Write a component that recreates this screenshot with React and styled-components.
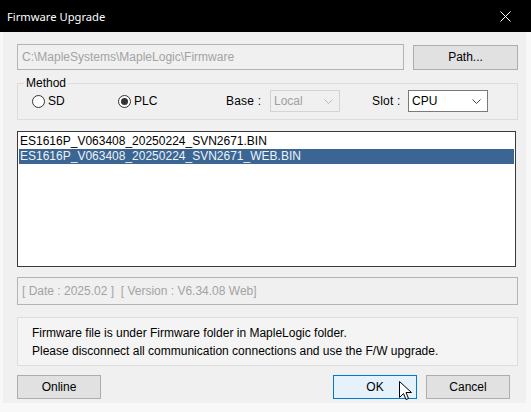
import React from "react";
import styled, { createGlobalStyle } from "styled-components";

const Global = createGlobalStyle`
  html, body { margin: 0; padding: 0; background: #f8f8f8; }
  body { font-family: "Liberation Sans", Arial, sans-serif; font-size: 12px; color: #000; }
  * { box-sizing: border-box; }
`;

const Window = styled.div`
  width: 531px;
  height: 412px;
  background: #f8f8f8;
  display: flex;
  flex-direction: column;
  position: relative;
  overflow: hidden;
`;

const TitleBar = styled.div`
  height: 32px;
  background: #000;
  color: #fff;
  display: flex;
  align-items: center;
  padding: 0 0 0 7px;
  font-family: "Noto Sans", "Open Sans", sans-serif;
  font-size: 11.2px;
  flex: none;
`;

const TitleText = styled.span`
  flex: 1;
  margin-top: 1px;
`;

const CloseBtn = styled.div`
  width: 46px;
  height: 32px;
  display: flex;
  align-items: center;
  justify-content: center;
  margin-right: 3px;
`;

const Body = styled.div`
  flex: none;
  height: 371px;
  margin: 0 5px 0 3px;
  background: #f0f0f0;
  padding: 12px 5px 0 14px;
  display: flex;
  flex-direction: column;
`;

const Row = styled.div`
  display: flex;
  align-items: center;
  height: ${(p) => p.$h || 26}px;
  margin-top: ${(p) => p.$mt || 0}px;
`;

const PathBox = styled.div`
  width: 387px;
  height: 26px;
  border: 1px solid #b4b4b4;
  background: #f0f0f0;
  color: #a3a3a3;
  display: flex;
  align-items: center;
  padding-left: 4px;
`;

const Button = styled.div`
  width: ${(p) => p.$w || 84}px;
  height: ${(p) => p.$h || 24}px;
  border: 1px solid ${(p) => (p.$default ? "#0078d7" : "#adadad")};
  background: ${(p) => (p.$default ? "#e5f1fb" : "#e1e1e1")};
  display: flex;
  align-items: center;
  justify-content: center;
  margin-left: ${(p) => p.$ml || 0}px;
  position: relative;
  flex: none;
`;

const Group = styled.fieldset`
  margin: 6px 0 0 0;
  padding: 0;
  border: 1px solid #dcdcdc;
  width: 501px;
  min-width: 0;
`;

const Legend = styled.legend`
  margin-left: 6px;
  padding: 0 2px;
  line-height: 14px;
  font-size: 12px;
`;

const GroupRow = styled.div`
  display: flex;
  align-items: center;
  height: 22px;
  margin-bottom: 7px;
  padding-left: 14px;
`;

const RadioItem = styled.label`
  display: flex;
  align-items: center;
  width: ${(p) => p.$w}px;
  gap: 3px;
  flex: none;
`;

const RadioCircle = styled.span`
  width: 13px;
  height: 13px;
  border-radius: 50%;
  border: 1px solid #333;
  background: #fff;
  display: flex;
  align-items: center;
  justify-content: center;
  &::after {
    content: "";
    display: ${(p) => (p.$checked ? "block" : "none")};
    width: 7px;
    height: 7px;
    border-radius: 50%;
    background: #333;
  }
`;

const FieldLabel = styled.span`
  width: ${(p) => p.$w}px;
  margin-left: ${(p) => p.$ml || 0}px;
  flex: none;
  letter-spacing: 0.2px;
`;

const Combo = styled.div`
  width: ${(p) => p.$w}px;
  height: 22px;
  border: 1px solid ${(p) => (p.$disabled ? "#d4d4d4" : "#7a7a7a")};
  background: ${(p) => (p.$disabled ? "#f0f0f0" : "#fff")};
  color: ${(p) => (p.$disabled ? "#a0a0a0" : "#000")};
  display: flex;
  align-items: center;
  padding: 0 6px 0 3px;
  flex: none;
  span { flex: 1; }
`;

const ListBox = styled.div`
  margin-top: 11px;
  width: 499px;
  height: 136px;
  border: 1px solid #3a3a3a;
  background: #fff;
  padding: 2px 1px 0 1px;
  display: flex;
  flex-direction: column;
`;

const ListItem = styled.div`
  height: 15px;
  line-height: 15px;
  padding-left: 1px;
  background: ${(p) => (p.$selected ? "#3b6592" : "transparent")};
  color: ${(p) => (p.$selected ? "#eef3f8" : "#000")};
  white-space: nowrap;
`;

const InfoBox = styled.div`
  margin-top: 10px;
  width: 501px;
  height: 28px;
  border: 1px solid #b4b4b4;
  background: #f0f0f0;
  color: #a3a3a3;
  display: flex;
  align-items: center;
  padding-left: 4px;
  padding-bottom: 1px;
  white-space: pre;
`;

const MessageBox = styled.div`
  margin-top: 12px;
  width: 501px;
  height: 49px;
  border: 1px solid #dedede;
  background: #f4f4f4;
  padding: 6px 0 0 14px;
  line-height: 18px;
`;

const ButtonRow = styled.div`
  display: flex;
  margin-top: 9px;
  width: 493px;
`;

const Spacer = styled.div`
  flex: 1;
`;

const Cursor = styled.svg`
  position: absolute;
  left: 65px;
  top: 5px;
`;

const Chevron = ({ color }) => (
  <svg width="9" height="5" viewBox="0 0 9 5">
    <polyline points="0.5,0.5 4.5,4.5 8.5,0.5" fill="none" stroke={color} strokeWidth="1" />
  </svg>
);

export default function App() {
  return (
    <>
      <Global />
      <Window>
        <TitleBar>
          <TitleText>Firmware Upgrade</TitleText>
          <CloseBtn>
            <svg width="11" height="11" viewBox="0 0 11 11">
              <path d="M0.5 0.5 L10.5 10.5 M10.5 0.5 L0.5 10.5" stroke="#fff" strokeWidth="1" />
            </svg>
          </CloseBtn>
        </TitleBar>
        <Body>
          <Row>
            <PathBox>C:\MapleSystems\MapleLogic\Firmware</PathBox>
            <Button $w={105} $h={25} $ml={9}>Path...</Button>
          </Row>
          <Group>
            <Legend>Method</Legend>
            <GroupRow>
              <RadioItem $w={86}>
                <RadioCircle />
                SD
              </RadioItem>
              <RadioItem $w={108}>
                <RadioCircle $checked />
                PLC
              </RadioItem>
              <FieldLabel $w={44}>Base :</FieldLabel>
              <Combo $w={70} $disabled>
                <span>Local</span>
                <Chevron color="#b8b8b8" />
              </Combo>
              <FieldLabel $w={36} $ml={32}>Slot :</FieldLabel>
              <Combo $w={80}>
                <span>CPU</span>
                <Chevron color="#444" />
              </Combo>
            </GroupRow>
          </Group>
          <ListBox>
            <ListItem>ES1616P_V063408_20250224_SVN2671.BIN</ListItem>
            <ListItem $selected>ES1616P_V063408_20250224_SVN2671_WEB.BIN</ListItem>
          </ListBox>
          <InfoBox>{"[ Date : 2025.02 ]  [ Version : V6.34.08 Web]"}</InfoBox>
          <MessageBox>
            <div>Firmware file is under Firmware folder in MapleLogic folder.</div>
            <div>Please disconnect all communication connections and use the F/W upgrade.</div>
          </MessageBox>
          <ButtonRow>
            <Button>Online</Button>
            <Spacer />
            <Button $default>
              OK
              <Cursor width="13" height="20" viewBox="0 0 13 20">
                <path
                  d="M0.5 0.5 L0.5 16.5 L4.5 12.5 L7 18.5 L9.5 17.5 L7 11.5 L12.5 11.5 Z"
                  fill="#fff"
                  stroke="#000"
                  strokeWidth="1"
                  strokeLinejoin="miter"
                />
              </Cursor>
            </Button>
            <Button $ml={9}>Cancel</Button>
          </ButtonRow>
        </Body>
      </Window>
    </>
  );
}
